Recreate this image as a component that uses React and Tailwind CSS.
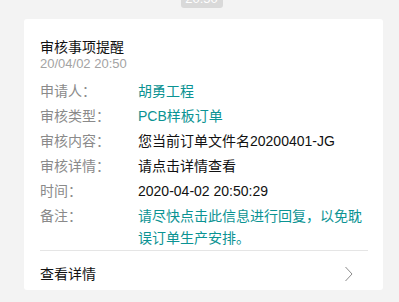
export default function App() {
  const font = { fontFamily: '"Liberation Sans", "Noto Sans CJK SC", sans-serif' };
  const rows = [
    { label: "申请人：", value: "胡勇工程", color: "text-[#0b9393]" },
    { label: "审核类型：", value: "PCB样板订单", color: "text-[#0b9393]" },
    { label: "审核内容：", value: "您当前订单文件名20200401-JG", color: "text-[#111111]" },
    { label: "审核详情：", value: "请点击详情查看", color: "text-[#111111]" },
    { label: "时间：", value: "2020-04-02 20:50:29", color: "text-[#111111]" },
    { label: "备注：", value: "请尽快点击此信息进行回复，以免耽误订单生产安排。", color: "text-[#0b9393]" },
  ];
  return (
    <div className="w-[399px] h-[302px] bg-[#f3f3f3] overflow-hidden" style={font}>
      <div className="flex justify-center">
        <div className="mt-[-10px] h-[18px] w-[42px] ml-[4px] rounded-[3px] bg-[#d9d9d9] text-white text-[13px] leading-[18px] text-center">
          20:50
        </div>
      </div>
      <div className="mt-[11px] ml-[24px] w-[359px] h-[271px] bg-white rounded-[3px] px-[16px] pt-[19px] flex flex-col">
        <div className="text-[14px] leading-[18px] text-[#111111]">审核事项提醒</div>
        <div className="text-[13px] leading-[16px] text-[#a3a3a3]">20/04/02 20:50</div>
        <div className="mt-[8px] flex flex-col gap-[3px]">
          {rows.map((r) => (
            <div key={r.label} className="flex text-[14px] leading-[22px]">
              <div className="w-[98px] shrink-0 text-[#8a8a8a]">{r.label}</div>
              <div className={`w-[230px] ${r.color}`}>{r.value}</div>
            </div>
          ))}
        </div>
        <div className="mt-[1px] h-px bg-[#e5e5e5] w-[328px]"></div>
        <div className="flex items-center justify-between pt-[13px] w-[328px]">
          <div className="text-[14px] leading-[20px] text-[#111111]">查看详情</div>
          <svg width="10" height="16" viewBox="0 0 10 16" className="mr-[14px]">
            <polyline points="1.5,1 8,8 1.5,15" fill="none" stroke="#8c8c8c" strokeWidth="1" />
          </svg>
        </div>
      </div>
    </div>
  );
}
